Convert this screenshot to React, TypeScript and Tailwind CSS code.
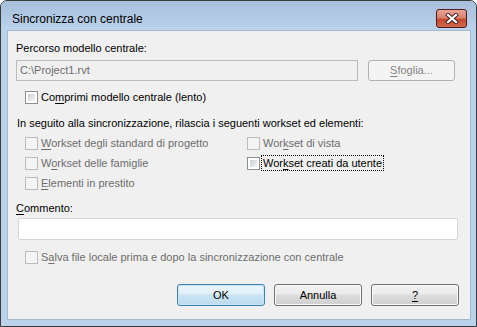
import React from "react";

const font = { fontFamily: '"Liberation Sans", Arial, sans-serif' };

function Key({ children }: { children: React.ReactNode }) {
  return <span className="underline underline-offset-[2px]">{children}</span>;
}

function Check({ disabled, label, focused }: { disabled?: boolean; label: React.ReactNode; focused?: boolean }) {
  return (
    <div className="flex h-[20px] items-center">
      <div
        className={
          disabled
            ? "h-[13px] w-[13px] border border-[#bcbcbc] bg-[#f4f4f4]"
            : "h-[13px] w-[13px] border border-[#8f8f8f] bg-white p-[2px]"
        }
      >
        {!disabled && <div className="h-full w-full bg-gradient-to-br from-[#cbcfd5] to-[#f4f5f6]" />}
      </div>
      <span
        className={
          (disabled ? "text-[#6d6d6d] " : "text-black ") +
          (focused ? "ml-[1px] border border-dotted border-black px-[1px] leading-[14px]" : "ml-[3px] leading-[15px]")
        }
      >
        {label}
      </span>
    </div>
  );
}

function Btn({ children, primary, disabled }: { children: React.ReactNode; primary?: boolean; disabled?: boolean }) {
  if (disabled)
    return (
      <div className="flex h-[21px] w-[87px] items-center justify-center rounded-[3px] border border-[#adb2b5] bg-[#f4f4f4] text-[#838383]">
        {children}
      </div>
    );
  return (
    <div
      className={
        "flex h-[22px] w-[88px] items-center justify-center rounded-[3px] border text-black " +
        (primary
          ? "border-[#3c7fb1] bg-[linear-gradient(#eaf6fd_0%,#e0eff8_45%,#c9e3f3_50%,#bcdcf0_100%)] shadow-[inset_0_0_0_1px_#c8e6f8]"
          : "border-[#707070] bg-[linear-gradient(#f2f2f2_0%,#ebebeb_45%,#dddddd_50%,#cfcfcf_100%)] shadow-[inset_0_0_0_1px_#fbfbfb]")
      }
    >
      {children}
    </div>
  );
}

export default function App() {
  return (
    <div className="h-[327px] w-[477px] bg-white" style={font}>
      <div className="flex h-full w-full flex-col rounded-t-[7px] border border-[#3a3a3a] bg-[#bad2ea] text-[11px]">
        {/* title bar */}
        <div className="flex h-[28px] items-start justify-between rounded-t-[6px] bg-gradient-to-b from-[#a6bfdc] to-[#bad2ea] pl-[11px] pr-[9px]">
          <span className="mt-[11px] text-[12px] leading-[15px] text-black">Sincronizza con centrale</span>
          <div className="mt-[8px] flex h-[19px] w-[31px] items-center justify-center rounded-[3px] border border-[#4e1c1c] bg-[linear-gradient(#e8a597_0%,#d98270_45%,#c5492f_55%,#cf6a4e_100%)]">
            <svg width="14" height="11" viewBox="0 0 14 11">
              <path d="M3 2 L11 9 M11 2 L3 9" stroke="#3b2020" strokeWidth="4" strokeLinecap="square" />
              <path d="M3 2 L11 9 M11 2 L3 9" stroke="#ffffff" strokeWidth="2.2" strokeLinecap="square" />
            </svg>
          </div>
        </div>
        {/* client area */}
        <div className="mb-[6px] ml-[6px] mr-[5px] mt-[1px] flex flex-1 flex-col border border-[#a4b8cc] bg-[#f0f0f0] pl-[8px] pr-[10px]">
          <div className="mt-[10px] leading-[15px]">Percorso modello centrale:</div>
          <div className="mt-[4px] flex items-center gap-[10px]">
            <div className="flex h-[21px] w-[342px] items-center border border-[#bcbcbc] bg-[#f0f0f0] pl-[3px] text-[#6d6d6d]">
              C:\Project1.rvt
            </div>
            <Btn disabled>
              <span>
                <Key>S</Key>foglia...
              </span>
            </Btn>
          </div>
          <div className="ml-[9px] mt-[6px]">
            <Check
              label={
                <>
                  Co<Key>m</Key>primi modello centrale (lento)
                </>
              }
            />
          </div>
          <div className="ml-[1px] mt-[9px] leading-[15px]">
            In seguito alla sincronizzazione, rilascia i seguenti workset ed elementi:
          </div>
          <div className="ml-[9px] mt-[2px] grid grid-cols-[222px_1fr]">
            <div className="flex flex-col">
              <Check
                disabled
                label={
                  <>
                    <Key>W</Key>orkset degli standard di progetto
                  </>
                }
              />
              <Check
                disabled
                label={
                  <>
                    W<Key>o</Key>rkset delle famiglie
                  </>
                }
              />
              <Check
                disabled
                label={
                  <>
                    <Key>E</Key>lementi in prestito
                  </>
                }
              />
            </div>
            <div className="flex flex-col">
              <Check
                disabled
                label={
                  <>
                    Wor<Key>k</Key>set di vista
                  </>
                }
              />
              <Check
                focused
                label={
                  <>
                    Wor<Key>k</Key>set creati da utente
                  </>
                }
              />
            </div>
          </div>
          <div className="mt-[8px] leading-[15px]">
            <Key>C</Key>ommento:
          </div>
          <div className="ml-[2px] mt-[2px] h-[22px] w-[440px] rounded-[2px] border border-[#d5d5d5] bg-white" />
          <div className="ml-[9px] mt-[7px]">
            <Check
              disabled
              label={
                <>
                  S<Key>a</Key>lva file locale prima e dopo la sincronizzazione con centrale
                </>
              }
            />
          </div>
          <div className="mt-[17px] flex justify-end gap-[9px] pr-[1px]">
            <Btn primary>OK</Btn>
            <Btn>Annulla</Btn>
            <Btn>
              <Key>?</Key>
            </Btn>
          </div>
        </div>
      </div>
    </div>
  );
}
